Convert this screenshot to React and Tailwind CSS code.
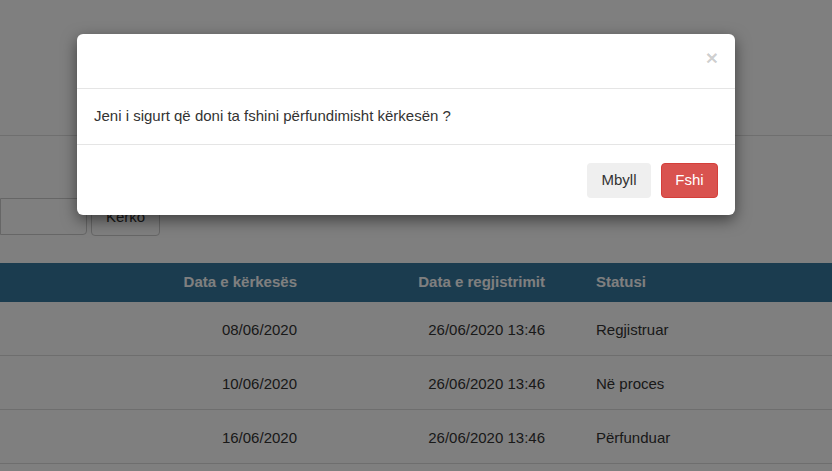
export default function App() {
  const rows = [
    { date: "08/06/2020", reg: "26/06/2020 13:46", status: "Regjistruar" },
    { date: "10/06/2020", reg: "26/06/2020 13:46", status: "Në proces" },
    { date: "16/06/2020", reg: "26/06/2020 13:46", status: "Përfunduar" },
  ];

  return (
    <div
      className="relative w-full h-[471px] overflow-hidden bg-white text-[15px] text-[#333]"
      style={{ fontFamily: '"Liberation Sans", Arial, sans-serif' }}
    >
      {/* Page behind the modal */}
      <div className="h-[136px] border-b border-[#dedede]" />
      <div className="flex items-start gap-1 mt-[62px]">
        <div className="w-[87px] h-[37px] border border-[#ccc] rounded-r" />
        <button className="h-[37px] px-[14px] border border-[#ccc] rounded mt-px">Kërko</button>
      </div>
      <div className="mt-[27px]">
        <div className="grid grid-cols-[309px_275px_1fr] h-[39px] items-center bg-[#36799f] text-white font-bold">
          <div className="px-3 text-right">Data e kërkesës</div>
          <div className="pl-3 pr-[39px] text-right">Data e regjistrimit</div>
          <div className="px-3">Statusi</div>
        </div>
        {rows.map((r) => (
          <div
            key={r.date}
            className="grid grid-cols-[309px_275px_1fr] h-[54px] items-center pt-1 border-b border-[#dcdcdc]"
          >
            <div className="px-3 text-right">{r.date}</div>
            <div className="pl-3 pr-[39px] text-right">{r.reg}</div>
            <div className="px-3">{r.status}</div>
          </div>
        ))}
      </div>

      {/* Backdrop */}
      <div className="absolute inset-0 bg-black/50" />

      {/* Modal */}
      <div className="absolute left-[77px] top-[34px] w-[658px] bg-white rounded-md shadow-[0_5px_15px_rgba(0,0,0,0.5)]">
        <div className="h-[55px] border-b border-[#e5e5e5] flex items-start justify-end pt-[14px] pr-[17px]">
          <span className="text-[21px] font-bold text-black/20 leading-5">×</span>
        </div>
        <div className="h-[56px] border-b border-[#e5e5e5] flex items-center px-[17px]">
          Jeni i sigurt që doni ta fshini përfundimisht kërkesën ?
        </div>
        <div className="h-[70px] flex items-start justify-end gap-[10px] pt-[18px] pr-[17px]">
          <button className="h-[35px] w-[64px] flex items-center justify-center rounded bg-[#efefef] text-[#333]">Mbyll</button>
          <button className="h-[35px] w-[57px] flex items-center justify-center rounded bg-[#d9534f] border border-[#d43f3a] text-white">Fshi</button>
        </div>
      </div>
    </div>
  );
}
